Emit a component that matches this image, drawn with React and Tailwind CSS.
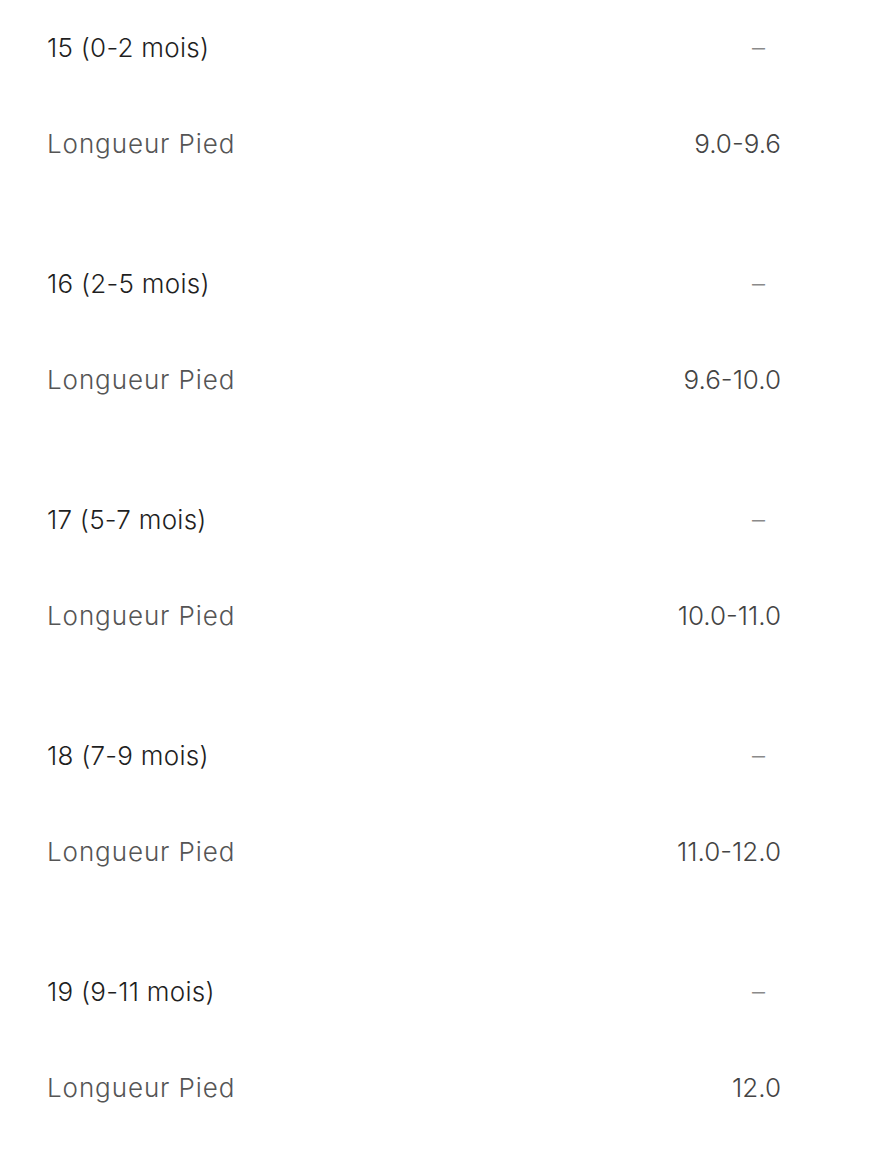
const SIZES = [
  { label: '15 (0-2 mois)', foot: '9.0-9.6' },
  { label: '16 (2-5 mois)', foot: '9.6-10.0' },
  { label: '17 (5-7 mois)', foot: '10.0-11.0' },
  { label: '18 (7-9 mois)', foot: '11.0-12.0' },
  { label: '19 (9-11 mois)', foot: '12.0' },
];

function SizeGroup({ label, foot }) {
  return (
    <div className="mb-[44px]">
      <div className="flex h-24 items-center justify-between">
        <span className="tracking-[0.01em] text-[#1f1f1f]">{label}</span>
        <span className="mr-[16px] text-[#8a8a8a]">–</span>
      </div>
      <div className="flex h-24 items-center justify-between">
        <span className="tracking-[0.035em] text-[#555555]">Longueur Pied</span>
        <span className="text-[#444444]">{foot}</span>
      </div>
    </div>
  );
}

export default function App() {
  return (
    <div
      className="min-h-screen bg-white pl-[47px] pr-[113px] text-[26px] font-light leading-none"
      style={{ fontFamily: 'Inter, "Open Sans", sans-serif' }}
    >
      {SIZES.map(s => (
        <SizeGroup key={s.label} label={s.label} foot={s.foot} />
      ))}
    </div>
  );
}
